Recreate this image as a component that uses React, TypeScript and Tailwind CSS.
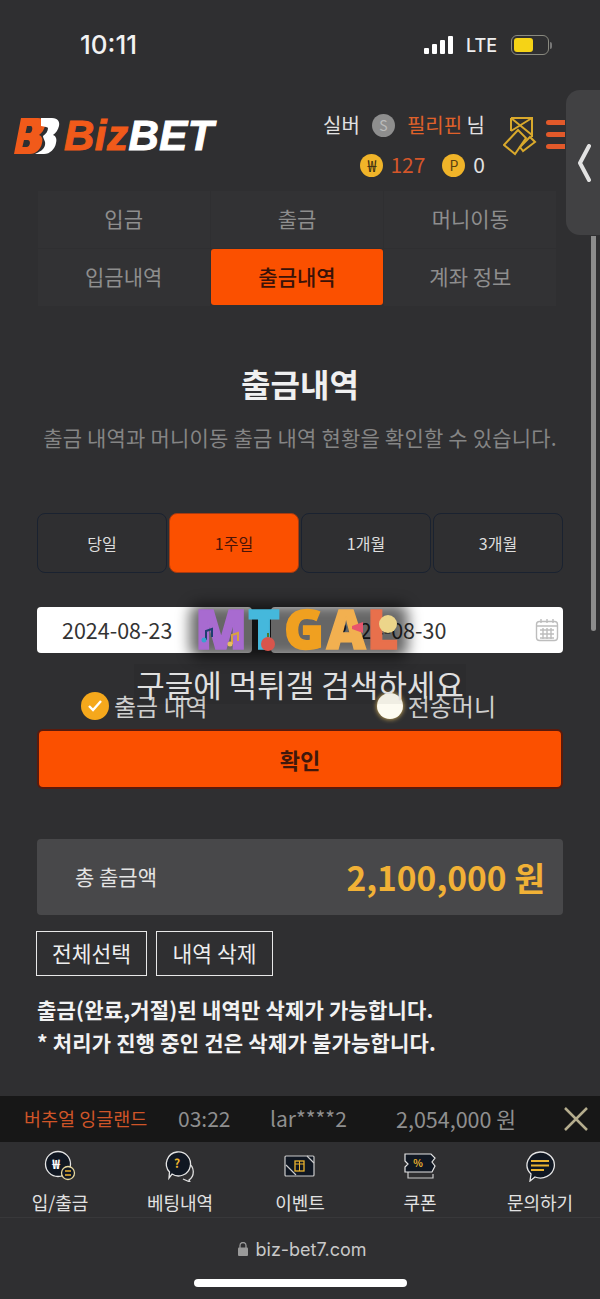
const font = { fontFamily: '"Noto Sans CJK KR", "Noto Sans", sans-serif' };

const tabs = ["입금", "출금", "머니이동", "입금내역", "출금내역", "계좌 정보"];
const ranges = ["당일", "1주일", "1개월", "3개월"];

function Logo() {
  return (
    <div className="flex items-center h-[40px] w-[204px]">
      <svg width="46" height="38" viewBox="0 0 46 38" className="shrink-0">
        <path d="M7 1h17c6 0 8 4 7 8-1 4-3 7-6 9 3 1 4 4 3 8-1 6-6 11-12 11H0zM13 9l-1.500 7h4c3 0 4-7 1-7zM10 23l-1.600 7h4c4 0 5-7 1-7z" fill="#f15a1a" fillRule="evenodd" />
        <path d="M27 1h11c6 0 8 4 7 8-1 4-3 7-6 9 3 1 4 4 3 8-1 6-6 11-12 11H21c4-2 9-4 10-9 1-4-2-6-2-9 3-2 5-5 5-8 0-1-3-1-7-2z" fill="#fff" />
      </svg>
      <div className="ml-[4px] text-[42px] leading-none font-bold italic tracking-[0.5px]" style={{ fontFamily: '"Liberation Sans", sans-serif', WebkitTextStroke: "1px currentColor" }}>
        <span className="text-[#f15a1a]">Biz</span>
        <span className="text-white">BET</span>
      </div>
    </div>
  );
}

function Coin({ label, className }: { label: string; className: string }) {
  return (
    <span className={`w-[23px] h-[23px] rounded-full flex items-center justify-center leading-none ${className}`}>
      {label}
    </span>
  );
}

function NavIcon({ index }: { index: number }) {
  if (index === 0) {
    return (
      <svg width="34" height="32" viewBox="0 0 34 32">
        <circle cx="15" cy="14" r="12.500" fill="#101722" stroke="#e5e5e5" strokeWidth="1.300" />
        <text x="13" y="19" textAnchor="middle" fontSize="13" fontWeight="700" fill="#fff">₩</text>
        <circle cx="25" cy="23" r="6.500" fill="#101722" stroke="#e8d9a0" strokeWidth="1.300" />
        <path d="M22 21h6M28 25h-6" stroke="#eab32f" strokeWidth="1.500" />
      </svg>
    );
  }
  if (index === 1) {
    return (
      <svg width="34" height="32" viewBox="0 0 34 32">
        <path d="M25 13a10 10 0 0 1 1 17l1 2-7-3" fill="none" stroke="#ddd" strokeWidth="1.300" />
        <path d="M14 2a12 12 0 1 1-5 22l-3 4 .5-6A12 12 0 0 1 14 2z" fill="#101722" stroke="#e5e5e5" strokeWidth="1.300" />
        <text x="14" y="18" textAnchor="middle" fontSize="12" fontWeight="700" fill="#eab32f">?</text>
      </svg>
    );
  }
  if (index === 2) {
    return (
      <svg width="34" height="32" viewBox="0 0 34 32">
        <rect x="2" y="6" width="29" height="20" rx="1" fill="#101722" stroke="#ccc" strokeWidth="1.200" />
        <path d="M3 15l10 10M24 6l7 7" stroke="#ccc" strokeWidth="1.200" />
        <rect x="12" y="11" width="9" height="10" fill="none" stroke="#eab32f" strokeWidth="1.300" />
        <path d="M16.500 11v10M12 14h9" stroke="#eab32f" strokeWidth="1" />
      </svg>
    );
  }
  if (index === 3) {
    return (
      <svg width="34" height="32" viewBox="0 0 34 32">
        <path d="M5 9v19h25v-4" fill="none" stroke="#ccc" strokeWidth="1.200" />
        <path d="M2 4h26l4 4-3 4 3 4-3 6H2v-5l3-3-3-3z" fill="#101722" stroke="#e5e5e5" strokeWidth="1.200" />
        <text x="15" y="17" textAnchor="middle" fontSize="10" fontWeight="700" fill="#eab32f">%</text>
      </svg>
    );
  }
  return (
    <svg width="34" height="32" viewBox="0 0 34 32">
      <path d="M17 2a14 13 0 1 1-5 25l-5 4 1-7A14 13 0 0 1 17 2z" fill="#101722" stroke="#e5e5e5" strokeWidth="1.300" />
      <path d="M8 11h18M8 15.500h18M8 20h13" stroke="#eab32f" strokeWidth="1.800" />
    </svg>
  );
}

function Watermark() {
  const letters = [
    { c: "M", color: "#a86bd0", w: "w-[50px]" },
    { c: "T", color: "#45b8dc", w: "w-[38px]" },
    { c: "G", color: "#f0a020", w: "w-[42px]" },
    { c: "A", color: "#f2b050", w: "w-[42px]" },
    { c: "L", color: "#e8704c", w: "w-[28px]" },
  ];
  return (
    <div className="absolute left-0 top-[600px] w-full flex flex-col items-center pointer-events-none">
      {/* soft dark halo behind the letters */}
      <div className="absolute left-[190px] top-[4px] w-[218px] h-[54px] bg-black/60 blur-[7px] rounded-[10px]" />
      <div className="relative flex items-center justify-center h-[56px] ml-[-10px]">
        {letters.map(({ c, color, w }) => (
          <span key={c} className={`${w} text-center text-[54px] leading-none font-extrabold`} style={{ color, fontFamily: '"Open Sans", sans-serif', WebkitTextStroke: `1.500px ${color}` }}>
            {c}
          </span>
        ))}
      </div>
      {/* stickers on the letters */}
      <svg width="240" height="60" viewBox="0 0 240 60" className="absolute left-[180px] top-0">
        <path d="M26 40v-9l6-2v8" fill="none" stroke="#1d3f70" strokeWidth="2" />
        <circle cx="24" cy="40" r="2.500" fill="#3aa0d0" />
        <path d="M52 44v-9l6-2v8" fill="none" stroke="#d9a040" strokeWidth="2" />
        <circle cx="50" cy="44" r="2.500" fill="#e8c060" />
        <circle cx="88" cy="44" r="7" fill="#d8554c" />
        <path d="M88 37v-4" stroke="#4a7a30" strokeWidth="2" />
        <path d="M172 26l11-4v11l-11-4z" fill="#e8556c" />
        <circle cx="208" cy="24" r="9" fill="#ecd58a" />
      </svg>
      <div className="relative mt-[8px] text-[31px] leading-[40px] text-[#e0e0e0] bg-black/5 px-[2px]" style={font}>
        구글에 먹튀갤 검색하세요
      </div>
    </div>
  );
}

export default function App() {
  return (
    <div className="relative w-[600px] h-[1299px] overflow-hidden bg-[#2f2f31] flex flex-col text-white" style={font}>
      {/* status bar */}
      <div className="h-[90px] pl-[80px] pr-[48px] pt-[27px] flex justify-between items-start shrink-0">
        <span className="text-[26px] leading-[36px] font-medium text-[#f2f2f2]" style={{ fontFamily: "Inter, sans-serif" }}>10:11</span>
        <div className="flex items-center h-[36px]">
          <div className="flex items-end gap-[3px] h-[18px]">
            <div className="w-[5px] h-[6px] bg-white rounded-[1px]" />
            <div className="w-[5px] h-[10px] bg-white rounded-[1px]" />
            <div className="w-[5px] h-[14px] bg-white rounded-[1px]" />
            <div className="w-[5px] h-[18px] bg-white rounded-[1px]" />
          </div>
          <span className="ml-[13px] text-[18px] font-medium text-[#eee]" style={{ fontFamily: "Inter, sans-serif" }}>LTE</span>
          <div className="ml-[14px] w-[38px] h-[20px] border border-[#8a8a80] rounded-[6px] p-[2px]">
            <div className="w-[19px] h-full bg-[#f5d316] rounded-[3px]" />
          </div>
          <div className="w-[2px] h-[7px] ml-[1px] bg-[#777] rounded-r-[2px]" />
        </div>
      </div>

      {/* header */}
      <div className="h-[100px] shrink-0 pl-[14px] pr-[35px] flex items-start justify-between">
        <div className="mt-[26px]">
          <Logo />
        </div>
        <div className="flex items-start">
          <div className="flex flex-col items-end mt-[19px]">
            <div className="flex items-center h-[32px] text-[20px] gap-[12px] text-[#e2e2e2]">
              <span>실버</span>
              <Coin label="S" className="bg-[#8e8e8e] text-[#bbb] text-[14px]" />
              <span><span className="text-[#e0612a]">필리핀</span> 님</span>
            </div>
            <div className="flex items-center h-[32px] mt-[8px] text-[21px]">
              <Coin label="₩" className="bg-[#f0b429] text-[#3a2c10] text-[16px]" />
              <span className="ml-[7px] text-[#d4562a]">127</span>
              <Coin label="P" className="ml-[17px] bg-[#f0b429] text-[#5a4210] text-[14px]" />
              <span className="ml-[8px] text-[#e2e2e2]">0</span>
            </div>
          </div>
          <svg width="34" height="40" viewBox="0 0 34 40" className="ml-[18px] mt-[27px]">
            <g fill="none" stroke="#d9a92c" strokeWidth="2">
              <path d="M8 1h21v19M8 1v13" />
              <path d="M8 1l21 17M29 1L8 14" />
              <path d="M1 28l14-15 8 8-11 16z" />
              <path d="M20 34l-3-4 10-10 5 5z" />
            </g>
          </svg>
          <div className="ml-[9px] mt-[30px] w-[19px] flex flex-col gap-[7px]">
            <div className="h-[5px] bg-[#e2592a] rounded-l-full" />
            <div className="h-[5px] bg-[#e2592a] rounded-l-full" />
            <div className="h-[5px] bg-[#e2592a] rounded-l-full" />
          </div>
        </div>
      </div>

      {/* tabs */}
      <div className="mx-[37px] w-[520px] grid grid-cols-3 grid-rows-[58px_58px] shrink-0">
        {tabs.map((t) => (
          <div
            key={t}
            className={
              t === "출금내역"
                ? "m-[1px] flex items-center justify-center bg-[#fb5000] rounded-[3px] text-[21px] text-[#3a1208] font-medium"
                : "m-[0.5px] flex items-center justify-center bg-[#323234] text-[21px] text-[#8e8e8e]"
            }
          >
            {t}
          </div>
        ))}
      </div>

      {/* title */}
      <div className="mt-[53px] text-center text-[32px] leading-[48px] font-bold text-[#f0f0f0]">출금내역</div>
      <div className="mt-[14px] text-center text-[21px] leading-[32px] text-[#858585] tracking-[0.2px]">
        출금 내역과 머니이동 출금 내역 현황을 확인할 수 있습니다.
      </div>

      {/* range */}
      <div className="mt-[60px] mx-[37px] w-[526px] grid grid-cols-4 gap-[2px] h-[60px] shrink-0">
        {ranges.map((r) => (
          <div
            key={r}
            className={
              r === "1주일"
                ? "flex items-center justify-center rounded-[8px] bg-[#fb5000] border border-[#a83a10] text-[16px] text-[#4a1408]"
                : "flex items-center justify-center rounded-[8px] bg-[#2f2f31] border-[1.5px] border-[#1a2230] text-[16px] text-[#dedede]"
            }
          >
            {r}
          </div>
        ))}
      </div>

      {/* dates */}
      <div className="mt-[34px] mx-[37px] w-[526px] h-[46px] flex shrink-0 gap-[19px] text-[#333] text-[21.500px]">
        <div className="w-[215px] bg-white rounded-[4px] pl-[25px] flex items-center">2024-08-23</div>
        <div className="flex-1 bg-white rounded-[4px] pl-[65px] pr-[4px] flex items-center justify-between">
          <span>2024-08-30</span>
          <svg width="24" height="24" viewBox="0 0 24 24" fill="none" stroke="#bdbdbd" strokeWidth="1.400">
            <rect x="1.500" y="3.500" width="21" height="19" rx="3" />
            <path d="M6 1v4M12 1v4M18 1v4M1.500 8h21M5 12h14M5 16h14M5 20h14M8 10v11M12 10v11M16 10v11" />
          </svg>
        </div>
      </div>

      {/* radio */}
      <div className="mt-[37px] h-[32px] relative shrink-0 flex text-[24px] text-[#cfcfcf]">
        <div className="ml-[81px] flex items-center">
          <span className="w-[28px] h-[28px] rounded-full bg-[#f5a81c] flex items-center justify-center">
            <svg width="16" height="14" viewBox="0 0 16 14" fill="none" stroke="#fff" strokeWidth="2.400">
              <path d="M2 7l4 4 8-9" />
            </svg>
          </span>
          <span className="ml-[5px]">출금 내역</span>
        </div>
        <div className="ml-[169px] flex items-center">
          <span className="w-[26px] h-[26px] rounded-full bg-[#fdfbf0] shadow-[0_0_5px_#e8c060]" />
          <span className="ml-[5px]">전송머니</span>
        </div>
      </div>

      {/* confirm */}
      <div className="mt-[7px] mx-[37px] w-[526px] h-[60px] shrink-0 rounded-[6px] bg-[#fb5000] border-2 border-[#5a1a0c] flex items-center justify-center text-[22px] font-bold text-[#40180c]">
        확인
      </div>

      {/* total */}
      <div className="mt-[50px] mx-[37px] w-[526px] h-[76px] shrink-0 rounded-[4px] bg-[#48484a] pl-[38px] pr-[18px] flex items-center justify-between">
        <span className="text-[21px] text-[#e4e4e4]">총 출금액</span>
        <span className="text-[33.500px] font-bold text-[#f1b136]">2,100,000 원</span>
      </div>

      {/* actions */}
      <div className="mt-[16px] ml-[36px] flex gap-[9px] shrink-0 text-[21.500px] text-[#eee]">
        <div className="w-[111px] h-[45px] border border-[#e8e8e8] flex items-center justify-center">전체선택</div>
        <div className="w-[117px] h-[45px] border border-[#e8e8e8] flex items-center justify-center">내역 삭제</div>
      </div>

      <div className="mt-[17px] ml-[37px] text-[21px] leading-[33px] font-bold text-[#f2f2f2] tracking-[0.2px]">
        <p>출금(완료,거절)된 내역만 삭제가 가능합니다.</p>
        <p>* 처리가 진행 중인 건은 삭제가 불가능합니다.</p>
      </div>

      {/* bottom */}
      <div className="mt-auto shrink-0">
        <div className="relative h-[46px] bg-[#171717] flex items-center text-[21px] text-[#8f8f8f]">
          <span className="ml-[24px] w-[154px] text-[18.500px] text-[#cf5528]">버추얼 잉글랜드</span>
          <span className="w-[92px]">03:22</span>
          <span className="w-[126px]">lar****2</span>
          <span className="text-[21.500px]">2,054,000 원</span>
          <svg width="24" height="24" viewBox="0 0 24 24" className="absolute right-[12px] top-[11px]" stroke="#b5ad8e" strokeWidth="2.500">
            <path d="M1 1l22 22M23 1L1 23" />
          </svg>
        </div>
        <div className="h-[76px] grid grid-cols-5 border-b border-[#38383a]">
          {["입/출금", "베팅내역", "이벤트", "쿠폰", "문의하기"].map((label, i) => (
            <div key={label} className="flex flex-col items-center pt-[8px]">
              <NavIcon index={i} />
              <span className="mt-[8px] text-[18px] leading-[24px] text-[#e2e2e2]">{label}</span>
            </div>
          ))}
        </div>
        <div className="h-[81px] flex flex-col items-center">
          <div className="mt-[19px] ml-[4px] h-[24px] flex items-center text-[#c9c9c9]">
            <svg width="10" height="14" viewBox="0 0 10 14" className="mr-[8px]">
              <rect y="5.500" width="10" height="8.500" rx="1" fill="#9a9a9a" />
              <path d="M2 6V3.500a3 3 0 0 1 6 0V6" fill="none" stroke="#9a9a9a" strokeWidth="1.300" />
            </svg>
            <span className="text-[18px]" style={{ fontFamily: "Inter, sans-serif" }}>biz-bet7.com</span>
          </div>
          <div className="mt-[18px] w-[213px] h-[8px] rounded-full bg-white" />
        </div>
      </div>

      {/* side drawer handle */}
      <div className="absolute right-0 top-[90px] w-[34px] h-[145px] bg-[#414143] rounded-l-[14px] flex items-center pl-[11px]">
        <svg width="14" height="38" viewBox="0 0 14 38" fill="none" stroke="#e2e2e2" strokeWidth="4" strokeLinecap="round" strokeLinejoin="round">
          <path d="M12 2L3 19l9 17" />
        </svg>
      </div>
      {/* scroll thumb */}
      <div className="absolute left-[591px] top-[236px] w-[5px] h-[395px] bg-[#8c8c8c] rounded-b-full" />

      <Watermark />
    </div>
  );
}
